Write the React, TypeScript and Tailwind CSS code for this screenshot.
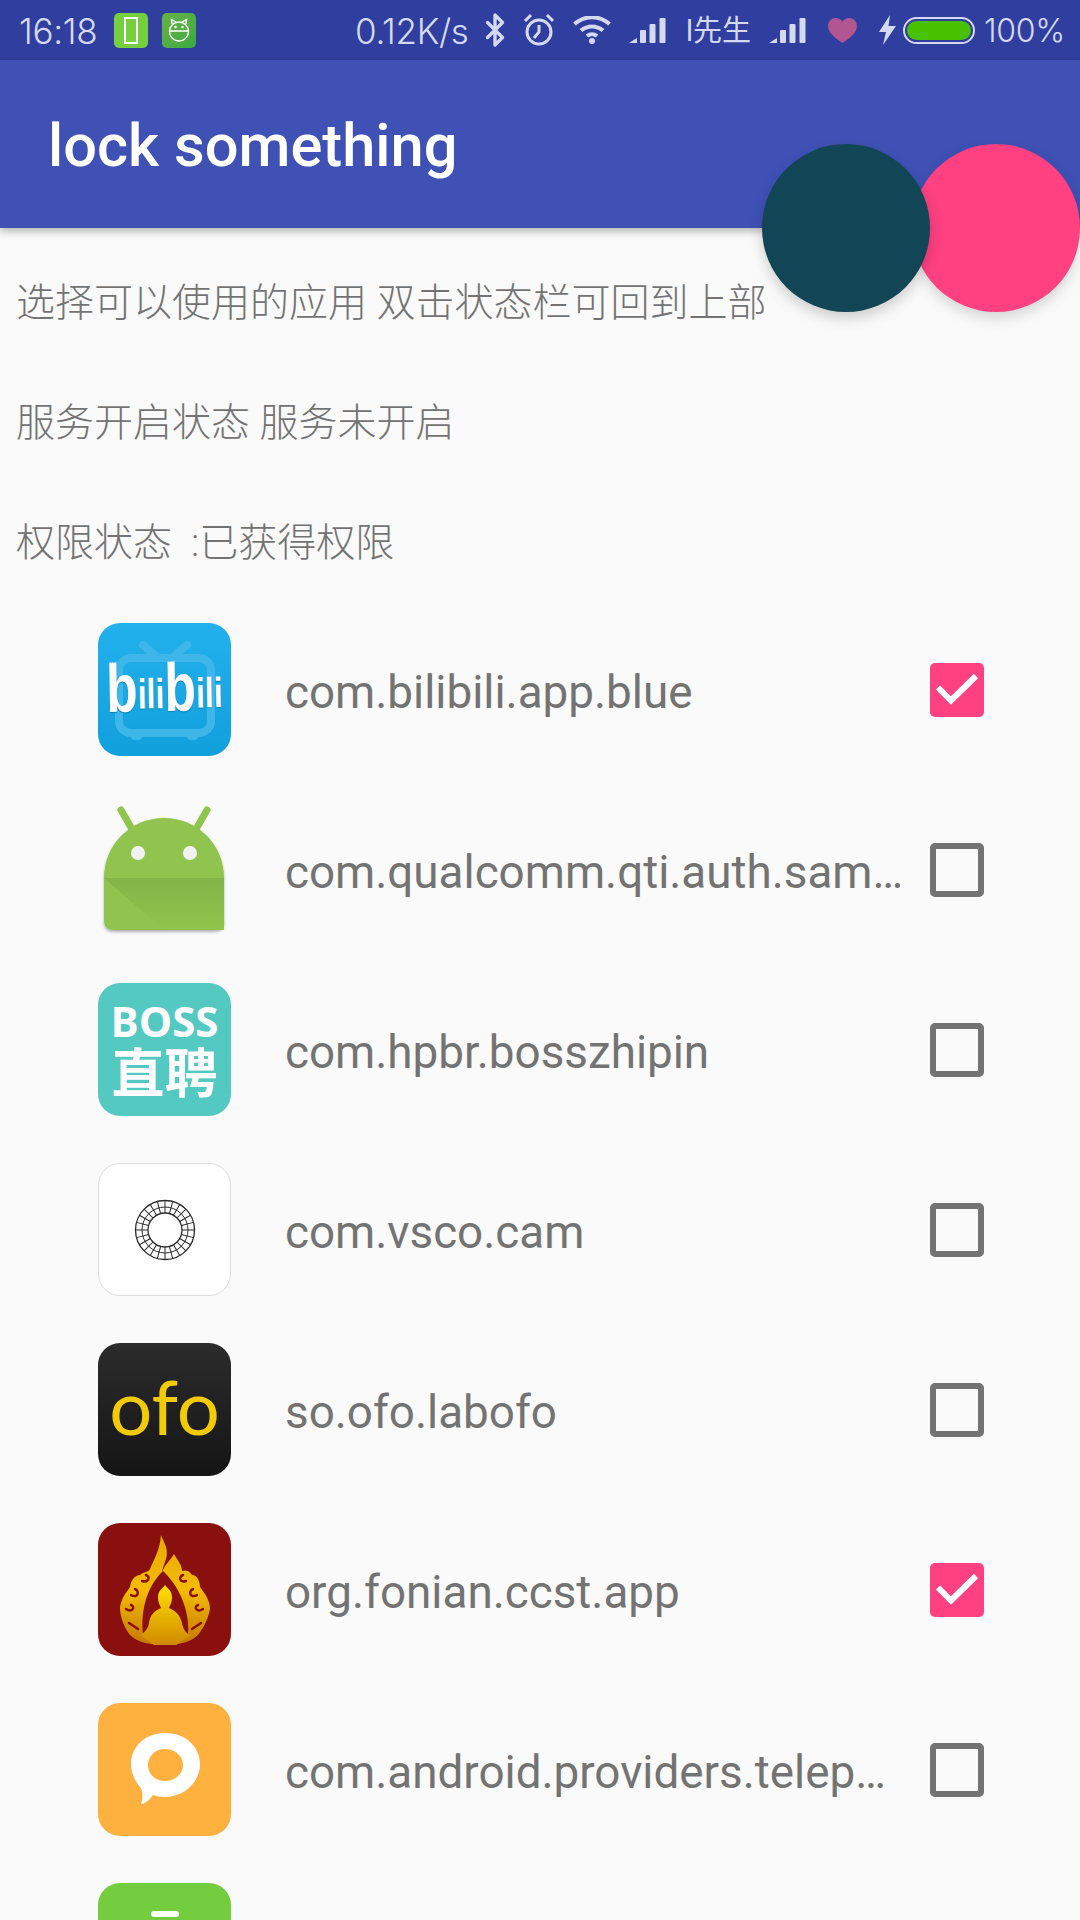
import { Bluetooth } from "lucide-react";

const cjk = '"Noto Sans CJK SC", sans-serif';

const SignalBars = () => (
  <svg width="37" height="25" viewBox="0 0 37 25" fill="#d5d9f0">
    <path d="M0 25 L8 20 V25 Z" />
    <rect x="11" y="12" width="6" height="13" rx="1" />
    <rect x="20.5" y="6" width="6" height="19" rx="1" />
    <rect x="30.5" y="0" width="6" height="25" rx="1" />
  </svg>
);

const StatusBar = () => (
  <div className="h-[60px] bg-[#303f9f] flex items-center text-[#d5d9f0] font-['Inter',sans-serif] font-light text-[35px] tracking-[-0.3px] pl-[19px] whitespace-nowrap">
    <span className="w-[95px] mt-[2px]">16:18</span>
    <div className="w-[34px] h-[35px] rounded-[5px] bg-[#76cf3f] flex items-center justify-center">
      <div className="w-[14px] h-[27px] border-2 border-white" />
    </div>
    <div className="w-[34px] h-[35px] ml-[14px] rounded-[5px] bg-gradient-to-br from-[#66b146] to-[#38ab42] flex items-center justify-center">
      <svg width="22" height="24" viewBox="0 0 22 24" fill="none" stroke="white" strokeWidth="1.4">
        <circle cx="11" cy="13.5" r="9.5" />
        <path d="M2 13 H20 M4 6 L3.5 1.5 L8 4 M18 6 L18.5 1.5 L14 4" />
        <circle cx="7.5" cy="9" r="0.6" fill="white" />
        <circle cx="14.5" cy="9" r="0.6" fill="white" />
      </svg>
    </div>
    <span className="ml-[159px] w-[110px] mt-[2px]">0.12K/s</span>
    <Bluetooth size={36} strokeWidth={2.2} className="ml-[12px]" />
    <svg className="ml-[10px]" width="32" height="34" viewBox="0 0 32 34" fill="none" stroke="#d5d9f0" strokeWidth="3">
      <circle cx="16" cy="19" r="12" />
      <path d="M16 12 V19 L11 25 M2 8 L8 2 M24 2 L30 8" />
    </svg>
    <svg className="ml-[18px]" width="38" height="28" viewBox="0 0 38 28" fill="none" stroke="#d5d9f0" strokeWidth="4">
      <path d="M1.5 8 C12 -1 26 -1 36.5 8" />
      <path d="M8 14.5 C14.5 9 23.5 9 30 14.5" />
      <path d="M14 20 C17 17.5 21 17.5 24 20" />
      <circle cx="19" cy="25" r="3" fill="#d5d9f0" stroke="none" />
    </svg>
    <div className="ml-[18px]"><SignalBars /></div>
    <span className="ml-[20px] w-[64px] mt-[3px] text-[29px] tracking-normal font-normal" style={{ fontFamily: `Roboto, ${cjk}` }}>
      l先生
    </span>
    <div className="ml-[19px]"><SignalBars /></div>
    <svg className="ml-[22px]" width="29" height="25" viewBox="0 0 30 26" fill="#b25692">
      <path d="M15 26 C8 21 0 16 0 8 C0 3 4 0 8 0 C11 0 13.5 1.5 15 4 C16.5 1.5 19 0 22 0 C26 0 30 3 30 8 C30 16 22 21 15 26 Z" />
    </svg>
    <svg className="ml-[22px]" width="17" height="30" viewBox="0 0 17 30" fill="#d5d9f0">
      <path d="M11 0 L0 17 H7 L4 30 L17 11 H9.5 Z" />
    </svg>
    <div className="ml-[7px] w-[72px] h-[27px] rounded-full border-2 border-[#d5d9f0] p-[2px]">
      <div className="w-full h-full rounded-full bg-[#48c100]" />
    </div>
    <span className="ml-[9px] mt-[2px] text-[32px]">100%</span>
  </div>
);

const BilibiliIcon = () => (
  <div className="relative w-[133px] h-[133px] rounded-[22px] overflow-hidden bg-gradient-to-b from-[#23b1ee] to-[#10a0dc]">
    <svg className="absolute inset-0" width="133" height="133" viewBox="0 0 133 133" fill="none" stroke="#3fb6ea" strokeLinecap="round">
      <rect x="21" y="35" width="92" height="75" rx="12" strokeWidth="8" />
      <path d="M45 22 L58 33 M89 22 L76 33 M37 113 H40 M93 113 H96" strokeWidth="8" />
    </svg>
    <div className="absolute left-[8px] top-[30px] flex items-end h-[66px] origin-left scale-x-[0.76] text-white font-bold font-['Liberation_Sans',sans-serif] leading-none [text-shadow:0_1px_1px_#0b7fb0] -rotate-1">
      <span className="text-[68px] leading-[62px]">b</span>
      <span className="text-[42px] leading-[42px] mb-[3px]">ili</span>
      <span className="text-[68px] leading-[62px]">b</span>
      <span className="text-[42px] leading-[42px] mb-[3px]">ili</span>
    </div>
  </div>
);

const AndroidIcon = () => (
  <svg width="133" height="133" viewBox="0 0 133 133">
    <defs>
      <filter id="drop" x="-10%" y="-10%" width="120%" height="120%">
        <feDropShadow dx="0" dy="2" stdDeviation="1.5" floodColor="#000" floodOpacity="0.3" />
      </filter>
      <linearGradient id="fold" x1="0" y1="0" x2="0" y2="1">
        <stop offset="0" stopColor="#82b448" />
        <stop offset="1" stopColor="#8fc54c" />
      </linearGradient>
    </defs>
    <path d="M23 7 L35 28 M109 7 L97 28" stroke="#8fc54c" strokeWidth="7" strokeLinecap="round" />
    <g filter="url(#drop)">
      <path d="M6 118 V75 C6 41 33 15 66 15 C99 15 126 41 126 75 V118 C126 124 122 127 116 127 H16 C10 127 6 124 6 118 Z" fill="#90c450" />
    </g>
    <path d="M6 75 H126 V127 H66 Z" fill="url(#fold)" />
    <circle cx="40" cy="50" r="7" fill="#f2f2f2" />
    <circle cx="92" cy="50" r="7" fill="#f2f2f2" />
  </svg>
);

const BossIcon = () => (
  <div className="w-[133px] h-[133px] rounded-[22px] bg-[#53c9c1] flex flex-col items-center text-white font-bold">
    <span className="mt-[16px] text-[42px] leading-[44px] font-['Open_Sans',sans-serif]">BOSS</span>
    <span className="text-[53px] leading-[56px] -mt-[1px]" style={{ fontFamily: cjk }}>直聘</span>
  </div>
);

const ringLines = Array.from({ length: 24 }, (_, i) => (i * 360) / 24);

const VscoIcon = () => (
  <div className="w-[133px] h-[133px] rounded-[22px] bg-white border border-[#dddddd] flex items-center justify-center">
    <svg width="62" height="62" viewBox="0 0 62 62" fill="none" stroke="#2a2a2a" strokeWidth="1">
      <circle cx="31" cy="31" r="29.5" strokeWidth="1.3" />
      <circle cx="31" cy="31" r="23" />
      <circle cx="31" cy="31" r="17" strokeWidth="1.3" />
      {ringLines.map((a) => (
        <line key={a} x1="31" y1="1.5" x2="31" y2="14" transform={`rotate(${a} 31 31)`} />
      ))}
    </svg>
  </div>
);

const OfoIcon = () => (
  <div className="w-[133px] h-[133px] rounded-[22px] bg-gradient-to-b from-[#2c2c2c] to-[#151515] flex items-center justify-center">
    <span className="text-[#f2cb05] text-[76px] leading-none font-['Lato',sans-serif] font-normal -mt-[8px]">ofo</span>
  </div>
);

const BuddhaIcon = () => (
  <div className="w-[133px] h-[133px] rounded-[22px] bg-[#89100e]">
    <svg width="133" height="133" viewBox="0 0 133 133">
      <defs>
        <linearGradient id="flame" x1="0" y1="0" x2="0" y2="1">
          <stop offset="0" stopColor="#e8a800" />
          <stop offset="0.5" stopColor="#f4bc00" />
          <stop offset="1" stopColor="#c47800" />
        </linearGradient>
        <linearGradient id="body" x1="0" y1="0" x2="0" y2="1">
          <stop offset="0" stopColor="#ffe000" />
          <stop offset="1" stopColor="#d08a00" />
        </linearGradient>
      </defs>
      <path
        d="M63 12 C66 20 71 26 68 36 C66 42 64 46 64 50 C66 42 72 38 76 31 C80 38 84 42 84 48 C90 46 93 50 94 52 C100 52 102 60 102 64 C108 72 112 78 112 86 C110 96 106 104 100 112 C92 120 78 122 67 122 C54 122 40 120 32 112 C26 104 22 94 22 84 C24 74 28 70 32 64 C33 56 38 52 42 52 C46 48 50 50 52 46 C54 40 62 28 63 12 Z"
        fill="url(#flame)"
      />
      <path d="M65 48 C50 62 42 86 45 112 L90 112 C92 86 80 62 65 48 Z" fill="#89100e" />
      <path
        d="M67 62 C70 66 74 68 74 74 C74 80 72 82 71 85 C78 88 82 92 84 100 C85 106 88 110 92 112 L78 122 H56 L42 112 C46 110 50 106 51 100 C52 92 56 88 63 85 C62 82 60 80 60 74 C60 68 64 66 67 62 Z"
        fill="url(#body)"
      />
      <path
        d="M44 58 C50 60 53 54 48 52 M33 72 C40 76 42 68 37 66 M28 86 C34 90 38 84 33 82 M31 100 L40 106 M88 58 C82 60 80 54 85 52 M99 72 C92 76 90 68 95 66 M105 86 C99 90 95 84 100 82 M103 100 L94 106"
        fill="none"
        stroke="#89100e"
        strokeWidth="2.5"
        strokeLinecap="round"
      />
    </svg>
  </div>
);

const ChatIcon = () => (
  <div className="w-[133px] h-[133px] rounded-[22px] bg-[#ffb13f]">
    <svg width="133" height="133" viewBox="0 0 133 133">
      <path
        fillRule="evenodd"
        fill="white"
        d="M67 30 C90 30 102 46 102 61 C102 79 86 94 67 94 C62 94 58 93 55 92 C51 98 46 101 43 101 C45 95 45 88 42 84 C36 77 33 69 33 61 C33 44 47 30 67 30 Z M67 46 C57 46 50 53 50 62 C50 71 57 78 67 78 C77 78 85 71 85 62 C85 53 77 46 67 46 Z"
      />
    </svg>
  </div>
);

const GreenIcon = () => (
  <div className="w-[133px] h-[133px] rounded-[22px] bg-[#73cd3f] flex justify-center">
    <div className="mt-[28px] w-[28px] h-[6px] rounded-full bg-white" />
  </div>
);

const CheckBox = ({ checked }: { checked: boolean }) =>
  checked ? (
    <div className="w-[54px] h-[54px] mt-[1px] rounded-[5px] bg-[#ff4081] flex items-center justify-center">
      <svg width="54" height="54" viewBox="0 0 54 54" fill="none" stroke="white" strokeWidth="6">
        <path d="M8 24.5 L21 37.5 L46 13" />
      </svg>
    </div>
  ) : (
    <div className="w-[54px] h-[54px] mt-[1px] rounded-[5px] border-[6px] border-[#737373]" />
  );

const apps = [
  { icon: <BilibiliIcon />, name: "com.bilibili.app.blue", checked: true },
  { icon: <AndroidIcon />, name: "com.qualcomm.qti.auth.sampleauthenticatorservice", checked: false },
  { icon: <BossIcon />, name: "com.hpbr.bosszhipin", checked: false },
  { icon: <VscoIcon />, name: "com.vsco.cam", checked: false },
  { icon: <OfoIcon />, name: "so.ofo.labofo", checked: false },
  { icon: <BuddhaIcon />, name: "org.fonian.ccst.app", checked: true },
  { icon: <ChatIcon />, name: "com.android.providers.telephony", checked: false },
  { icon: <GreenIcon />, name: "", checked: false },
];

const infoLines = ["选择可以使用的应用 双击状态栏可回到上部", "服务开启状态 服务未开启", "权限状态  :已获得权限"];

const App = () => {
  return (
    <div className="relative w-[1080px] h-[1920px] overflow-hidden bg-[#fafafa] font-['Roboto',sans-serif]">
      <StatusBar />
      <div className="relative h-[168px] bg-[#3f51b5] shadow-[0_3px_8px_rgba(0,0,0,0.3)] flex items-center pl-[48px] pt-[6px]">
        <h1 className="text-white text-[59.6px] font-medium">lock something</h1>
      </div>

      <div className="pt-[49px] pl-[16px] flex flex-col gap-[68px] text-[#737373] text-[39px] leading-[52px] font-light whitespace-pre-wrap" style={{ fontFamily: `Roboto, ${cjk}` }}>
        {infoLines.map((line) => (
          <p key={line}>{line}</p>
        ))}
      </div>

      <div className="mt-[54px] pl-[98px] pr-[96px] flex flex-col gap-[47px]">
        {apps.map((app, i) => (
          <div key={i} className="flex items-center h-[133px]">
            <div className="shrink-0">{app.icon}</div>
            <span className="ml-[54px] mr-[24px] pt-[8px] flex-1 min-w-0 truncate text-[#737373] text-[45.8px]">{app.name}</span>
            <CheckBox checked={app.checked} />
          </div>
        ))}
      </div>

      <div className="absolute left-[912px] top-[144px] w-[168px] h-[168px] rounded-full bg-[#ff4081] shadow-[0_6px_14px_rgba(0,0,0,0.15)]" />
      <div className="absolute left-[762px] top-[144px] w-[168px] h-[168px] rounded-full bg-[#124556] shadow-[0_6px_14px_rgba(0,0,0,0.18)]" />
    </div>
  );
};

export default App;
